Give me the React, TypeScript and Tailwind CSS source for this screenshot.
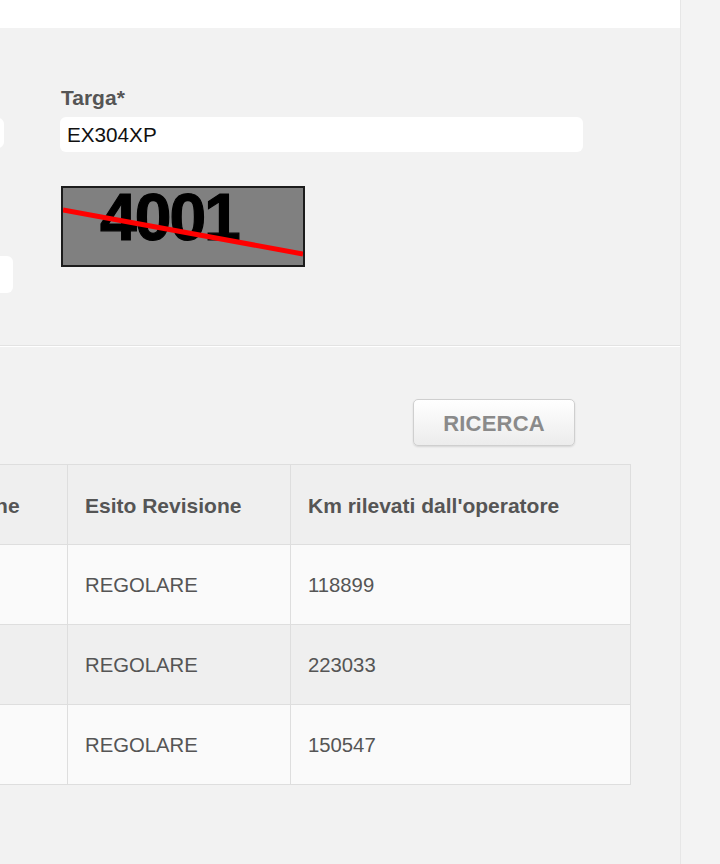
import React from 'react';

const rows = [
  { data: '14/05/2019', esito: 'REGOLARE', km: '118899' },
  { data: '22/06/2021', esito: 'REGOLARE', km: '223033' },
  { data: '09/04/2017', esito: 'REGOLARE', km: '150547' },
];

const Captcha: React.FC = () => (
  <div className="w-[244px] h-[81px] border-2 border-[#1c1c1c] bg-[#808080]">
    <svg width="240" height="77" viewBox="0 0 240 77">
      <text
        x="37"
        y="52"
        fontFamily="'Liberation Sans', Arial, sans-serif"
        fontWeight="bold"
        fontSize="66"
        letterSpacing="-2"
        fill="#000"
        stroke="#000"
        strokeWidth="1.2"
      >
        4001
      </text>
      <line x1="0" y1="22" x2="240" y2="66" stroke="#ff0000" strokeWidth="5" />
    </svg>
  </div>
);

const App: React.FC = () => {
  return (
    <div className="flex w-[720px] h-[864px] overflow-hidden font-['Liberation_Sans',Arial,sans-serif]">
      {/* Main panel */}
      <div className="w-[680px] shrink-0 bg-[#f2f2f2] overflow-hidden flex flex-col">
        <div className="h-[28px] bg-white shrink-0" />

        {/* Search form */}
        <div className="flex pt-[58px] h-[318px] border-b border-[#e3e3e3] shadow-[0_1px_0_#ffffff] shrink-0">
          <div className="w-[280px] -ml-[267px] shrink-0 flex flex-col">
            <div className="h-[24px]" />
            <div className="mt-[8px] w-[271px] h-[30px] bg-white rounded-[6px]" />
            <div className="mt-[108px] w-full h-[37px] bg-white rounded-[6px]" />
          </div>
          <div className="ml-[47px] flex flex-col">
            <label className="text-[21px] font-bold text-[#555] leading-[24px] pl-[1px]">Targa*</label>
            <div className="mt-[7px] w-[523px] h-[35px] bg-white rounded-[6px] flex items-center px-[7px] text-[20.7px] text-[#111]">
              EX304XP
            </div>
            <div className="mt-[34px] pl-[1px]">
              <Captcha />
            </div>
          </div>
        </div>

        {/* Results */}
        <div className="flex flex-col pt-[53px]">
          <div className="w-[630px] flex justify-end pr-[55px]">
            <button className="w-[162px] h-[47px] pt-[2px] rounded-[5px] border border-[#cfcfcf] bg-gradient-to-b from-white to-[#ececec] shadow-[0_1px_2px_rgba(0,0,0,0.12)] text-[22px] font-bold text-[#8a8a8a] tracking-[0.2px]">
              RICERCA
            </button>
          </div>

          <table className="mt-[18px] -ml-[149px] w-[779px] border-collapse table-fixed text-[20.3px] text-[#555]">
            <colgroup>
              <col className="w-[216px]" />
              <col className="w-[223px]" />
              <col className="w-[340px]" />
            </colgroup>
            <thead>
              <tr className="h-[80px] bg-[#efefef] text-[21px]">
                <th className="border border-[#dedede] text-left font-bold pl-[17px] pt-[3px]">Data Revisione</th>
                <th className="border border-[#dedede] text-left font-bold pl-[17px] pt-[3px]">Esito Revisione</th>
                <th className="border border-[#dedede] text-left font-bold pl-[17px] pt-[3px]">Km rilevati dall'operatore</th>
              </tr>
            </thead>
            <tbody>
              {rows.map((r, i) => (
                <tr key={r.km} className={`h-[80px] ${i % 2 === 1 ? 'bg-[#efefef]' : 'bg-[#fafafa]'}`}>
                  <td className="border border-[#dedede] pl-[17px] pt-[1px]">{r.data}</td>
                  <td className="border border-[#dedede] pl-[17px] pt-[1px]">{r.esito}</td>
                  <td className="border border-[#dedede] pl-[17px] pt-[1px]">{r.km}</td>
                </tr>
              ))}
            </tbody>
          </table>
        </div>
      </div>

      {/* Right gutter */}
      <div className="flex-1 bg-[#f3f3f3] border-l border-[#e6e6e6]" />
    </div>
  );
};

export default App;
